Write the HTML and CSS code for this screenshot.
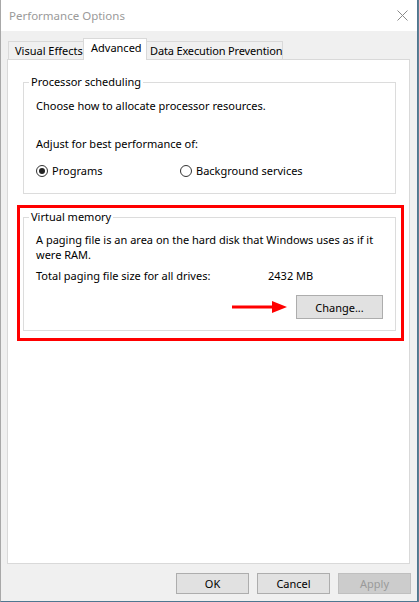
FILE: index.html
```html
<!DOCTYPE html>
<html>
<head>
<meta charset="utf-8">
<link rel="stylesheet" href="styles.css">
</head>
<body>
<div class="window">
  <div class="titlebar">
    <span class="title">Performance Options</span>
    <svg class="close" width="11" height="11" viewBox="0 0 11 11"><path d="M0.5 0.5L10.5 10.5M10.5 0.5L0.5 10.5" stroke="#8a8a8a" stroke-width="1"/></svg>
  </div>
  <div class="client">
    <div class="tabs">
      <div class="tab first">Visual Effects</div>
      <div class="tab selected">Advanced</div>
      <div class="tab last">Data Execution Prevention</div>
    </div>
    <div class="panel">
      <fieldset class="group proc">
        <legend>Processor scheduling</legend>
        <p class="line">Choose how to allocate processor resources.</p>
        <p class="line adjust">Adjust for best performance of:</p>
        <div class="radios">
          <label class="radio r1"><span class="dot on"></span>Programs</label>
          <label class="radio"><span class="dot"></span>Background services</label>
        </div>
      </fieldset>
      <div class="highlight">
        <fieldset class="group vm">
          <legend>Virtual memory</legend>
          <p class="para">A paging file is an area on the hard disk that Windows uses as if it were RAM.</p>
          <div class="total"><span class="tlabel">Total paging file size for all drives:</span><span>2432 MB</span></div>
          <div class="changerow">
            <svg class="arrow" width="56" height="14" viewBox="0 0 56 14"><path d="M0 7H42" stroke="#ff0000" stroke-width="3"/><path d="M40 1L55 7L40 13Z" fill="#ff0000"/></svg>
            <button class="btn change">Change...</button>
          </div>
        </fieldset>
      </div>
    </div>
    <div class="footer">
      <button class="btn">OK</button>
      <button class="btn">Cancel</button>
      <button class="btn disabled">Apply</button>
    </div>
  </div>
</div>
</body>
</html>
```
FILE: styles.css
```css
html, body {
  margin: 0;
  padding: 0;
}
body {
  background: #5f7f92;
  font-family: "Noto Sans", "Open Sans", sans-serif;
  font-size: 11px;
  color: #000;
}
.window {
  width: 418px;
  height: 602px;
  box-sizing: border-box;
  background: #f0f0f0;
  border-left: 1px solid #a8a8a8;
  border-right: 1px solid #4f7690;
  border-bottom: 1px solid #4f7690;
  display: flex;
  flex-direction: column;
}
.titlebar {
  height: 31px;
  flex: none;
  background: #fff;
  display: flex;
  align-items: center;
  justify-content: space-between;
  padding: 0 9px 0 8px;
}
.title {
  color: #9a9a9a;
  font-size: 11.5px;
  line-height: 16px;
  margin-top: 1px;
}
.close {
  display: block;
  margin-top: -1px;
}
.client {
  padding: 7px 0 0 6px;
  display: flex;
  flex-direction: column;
}
.tabs {
  display: flex;
  align-items: flex-end;
  height: 21px;
  padding-left: 1px;
  position: relative;
  z-index: 1;
}
.tab {
  height: 18px;
  box-sizing: border-box;
  border: 1px solid #d9d9d9;
  border-bottom: none;
  background: #f0f0f0;
  line-height: 17px;
  white-space: nowrap;
  flex: none;
}
.tab.first {
  width: 75px;
  border-right: none;
  padding-left: 6px;
}
.tab.selected {
  height: 22px;
  margin-bottom: -1px;
  background: #fff;
  width: 64px;
  padding-left: 7px;
  line-height: 18px;
}
.tab.last {
  border-left: none;
  width: 136px;
  padding-left: 3px;
  letter-spacing: -0.15px;
}
.panel {
  width: 403px;
  height: 505px;
  box-sizing: border-box;
  background: #fff;
  border: 1px solid #d9d9d9;
  padding: 0 0 0 9px;
}
.group {
  border: 1px solid #dcdcdc;
  margin: 0;
  padding: 0 0 0 12px;
  min-width: 0;
}
.group legend {
  padding: 0 2px 0 2px;
  margin-left: -7px;
  line-height: 16px;
}
.proc {
  margin: 14px 0 0 6px;
  width: 373px;
  box-sizing: border-box;
  padding-bottom: 14px;
}
.line {
  margin: 0;
  line-height: 16px;
}
.proc .line:first-of-type {
  margin-top: 8px;
}
.adjust {
  margin-top: 22px !important;
}
.radios {
  display: flex;
  margin-top: 11px;
  height: 16px;
  align-items: center;
}
.radio {
  display: flex;
  align-items: center;
  line-height: 16px;
}
.r1 {
  width: 144px;
}
.dot {
  width: 12px;
  height: 12px;
  border: 1px solid #333;
  border-radius: 50%;
  box-sizing: border-box;
  margin-right: 4px;
  display: flex;
  align-items: center;
  justify-content: center;
  background: #fff;
}
.dot.on::after {
  content: "";
  width: 6px;
  height: 6px;
  border-radius: 50%;
  background: #222;
}
.highlight {
  margin-top: 11px;
  width: 387px;
  box-sizing: border-box;
  border: 3px solid #ff0000;
  padding: 1px 4px 7px 3px;
}
.vm {
  width: 373px;
  box-sizing: border-box;
  padding-bottom: 11px;
  padding-right: 12px;
}
.para {
  margin: 7px 0 0 0;
  line-height: 15px;
}
.total {
  margin-top: 6px;
  line-height: 16px;
  display: flex;
}
.tlabel {
  width: 232px;
}
.changerow {
  margin-top: 11px;
  display: flex;
  justify-content: flex-end;
  align-items: center;
  gap: 8px;
}
.arrow {
  display: block;
}
.btn {
  font-family: inherit;
  font-size: 11px;
  color: #000;
  background: #e1e1e1;
  border: 1px solid #adadad;
  padding: 0;
  margin: 0;
  width: 73px;
  height: 21px;
  line-height: 19px;
}
.btn.change {
  width: 87px;
  height: 24px;
}
.btn.disabled {
  background: #cccccc;
  border-color: #bfbfbf;
  color: #9a9a9a;
}
.footer {
  display: flex;
  justify-content: flex-end;
  gap: 8px;
  margin-top: 9px;
  padding-right: 6px;
}
```
